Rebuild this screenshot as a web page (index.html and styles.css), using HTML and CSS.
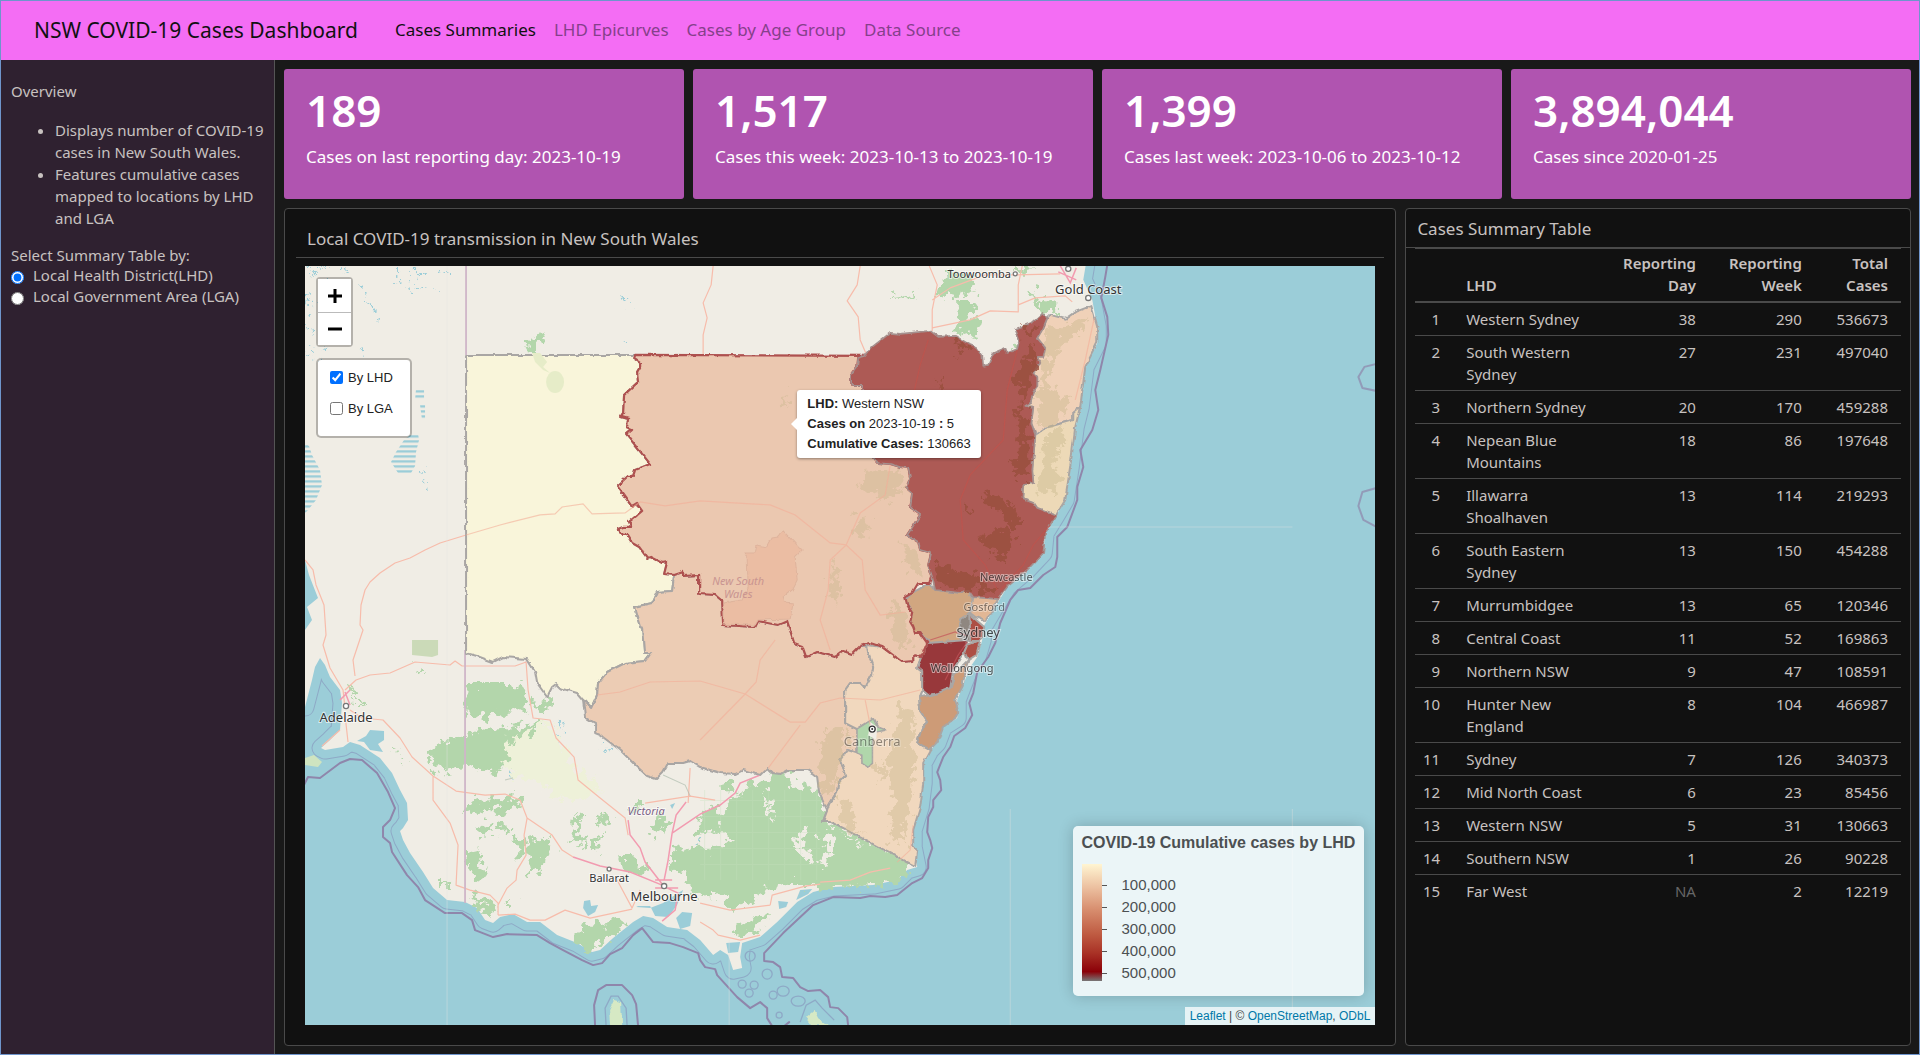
FILE: index.html
```html
<!DOCTYPE html>
<html lang="en">
<head>
<meta charset="utf-8">
<meta name="viewport" content="width=device-width, initial-scale=1">
<title>NSW COVID-19 Cases Dashboard</title>
<link rel="stylesheet" href="styles.css">
</head>
<body>
<header class="navbar">
  <h1 class="brand">NSW COVID-19 Cases Dashboard</h1>
  <nav class="nav">
    <a class="nav-link active" href="#summaries">Cases Summaries</a>
    <a class="nav-link" href="#epicurves">LHD Epicurves</a>
    <a class="nav-link" href="#age">Cases by Age Group</a>
    <a class="nav-link" href="#source">Data Source</a>
  </nav>
</header>
<div class="layout">
  <aside class="sidebar">
    <p class="overview">Overview</p>
    <ul class="notes">
      <li>Displays number of COVID-19 cases in New South Wales.</li>
      <li>Features cumulative cases mapped to locations by LHD and LGA</li>
    </ul>
    <fieldset class="selector">
      <legend>Select Summary Table by:</legend>
      <label><input type="radio" name="level" checked>Local Health District(LHD)</label>
      <label><input type="radio" name="level">Local Government Area (LGA)</label>
    </fieldset>
  </aside>
  <main class="content">
    <section class="values">
      <div class="value-box"><p class="value">189</p><p class="caption">Cases on last reporting day: 2023-10-19</p></div>
      <div class="value-box"><p class="value">1,517</p><p class="caption">Cases this week: 2023-10-13 to 2023-10-19</p></div>
      <div class="value-box"><p class="value">1,399</p><p class="caption">Cases last week: 2023-10-06 to 2023-10-12</p></div>
      <div class="value-box"><p class="value">3,894,044</p><p class="caption">Cases since 2020-01-25</p></div>
    </section>
    <section class="panels">
      <div class="card map-card">
        <h2 class="card-title map-title">Local COVID-19 transmission in New South Wales</h2>
        <div class="map">
          <svg class="map-canvas" viewBox="305 266 1070 759" preserveAspectRatio="xMidYMid slice" role="img" aria-label="Map of New South Wales health districts">
            <defs>
              <filter id="rough" x="-10%" y="-10%" width="120%" height="120%">
                <feTurbulence type="fractalNoise" baseFrequency="0.11" numOctaves="4" seed="4"/>
                <feDisplacementMap in="SourceGraphic" scale="24" xChannelSelector="R" yChannelSelector="G"/>
              </filter>
              <filter id="jag" x="-5%" y="-5%" width="110%" height="110%">
                <feTurbulence type="fractalNoise" baseFrequency="0.12" numOctaves="3" seed="9"/>
                <feDisplacementMap in="SourceGraphic" scale="4" xChannelSelector="R" yChannelSelector="G"/>
              </filter>
              <pattern id="lake" width="6" height="5" patternUnits="userSpaceOnUse"><path d="M0 1.5H6" stroke="#9bcdd8" stroke-width="2.4"/></pattern>
              <pattern id="grid" width="16" height="16" patternUnits="userSpaceOnUse"><path d="M0 .5H16M.5 0V16" stroke="#c5e0bd" stroke-width="1"/></pattern>
              <path id="land" d="M295 707L305 707 312 680 315 667 320 658 325 665 330 677 340 690 342 703 340 730 330 740 321 748 325 750 343 747 350 742 360 745 380 758 392 773 400 790 407 803 408 820 403 828 400 831 403 840 410 853 423 872 433 888 447 900 465 902 477 908 485 920 493 923 500 917 513 914 527 922 540 922 557 935 577 943 592 952 600 950 613 938 633 922 643 916 653 918 667 927 687 930 700 940 713 955 720 950 728 955 733 970 742 968 740 957 742 943 760 937 777 922 797 902 813 892 833 887 873 885 897 880 907 870 917 867 913 847 913 830 920 807 923 783 923 763 930 750 937 743 943 727 957 718 957 700 962 687 970 667 977 657 982 640 983 627 993 610 1007 587 1027 570 1043 553 1045 533 1056 515 1065 500 1070 467 1075 427 1080 407 1085 367 1097 343 1097 327 1092 300 1083 280 1087 256 295 256Z"/>
            </defs>
            <rect x="305" y="266" width="1070" height="759" fill="#9bcdd8"/>
            <g stroke-linejoin="round">
              <use href="#land" fill="none" stroke="#8ea9c6" stroke-width="19"/>
              <use href="#land" fill="none" stroke="#9bcdd8" stroke-width="17"/>
              <use href="#land" fill="#f0ede5"/>
            </g>
            <g fill="#9bcdd8">
              <path d="M295 555L305 560 309 575 318 598 307 607 312 620 305 630 295 630Z"/>
              <path d="M357 741L366 736 370 730 384 731 384 740 378 744 383 752 370 750 364 742Z"/>
              <path d="M636 907L650 908 663 903 675 895 683 890 677 905 668 917 655 916 650 906 638 906Z"/>
              <path d="M676 918L682 912 692 913 690 926 680 929Z"/>
              <path d="M584 901L590 900 591 906 598 905 595 912 588 916 583 908Z"/>
              <path d="M778 901L788 902 786 907 779 909Z"/>
              <path d="M800 890L812 889 808 894 796 900Z"/>
              <path d="M726 943L740 942 738 952 728 953Z"/>
              <path d="M509 770L514 778 513 780 509 776ZM565 785H568V791H563ZM670 805L675 803 672 809Z"/>
            </g>
            <path d="M305 443L309 446 312 455 320 470 322 485 316 500 308 510 305 513ZM410 435L418 434 419 440 416 452 415 466 411 473 398 473 391 462 396 452 404 440ZM416 389H424V400H415ZM420 405H425V420H422Z" fill="url(#lake)"/>
            <g fill="none" stroke="#9bcdd8" stroke-width="2" stroke-dasharray="4 6 2 8 5 3" filter="url(#rough)">
              <path d="M308 266L330 283M318 268L350 270M395 272L432 276M398 280L440 288M408 288L415 292M305 298L328 310M305 330L320 338M305 348L330 350M305 355L318 362M360 285L380 322M362 350L372 352M420 470L428 490M625 297L631 308M626 340L634 341M305 320L312 323M443 270L446 276"/>
              <path d="M555 724L570 730M555 735L562 738M603 740L608 752M698 840L712 850M806 806L812 812" stroke-width="3"/>
            </g>
            <g fill="#b3d6ab" filter="url(#rough)">
              <path d="M468 684H512L524 692 527 706 514 712 502 713 484 717 466 714Z"/>
              <path d="M530 703L548 699 554 702 545 711 534 708Z"/>
              <path d="M429 753L440 743 462 738 482 730 515 728 535 724 538 730 525 735 542 748 530 752 518 748 512 755 505 768 492 773 480 766 455 767 430 773Z"/>
              <path d="M466 806L480 800 520 798 524 804 510 812 488 810 467 815Z"/>
              <path d="M465 848L480 852 486 878 478 880 466 865Z"/>
              <path d="M517 840L524 835 526 852 516 855ZM530 840L545 838 552 855 540 865 532 875 528 855Z"/>
              <path d="M480 825L490 822 492 832 484 840ZM498 822L504 820 506 830 500 834ZM440 880H446V884H440ZM505 902L512 900 514 906 506 906ZM395 748L400 752 396 754ZM402 760L407 762 403 765ZM350 685L356 692 352 700ZM358 695L362 698 358 704ZM600 703L604 700 604 712ZM415 672L420 668 422 675Z"/>
              <path d="M467 894L490 898 497 912 490 918 478 905Z"/>
              <path d="M578 930L592 924 625 918 628 925 612 935 593 950 582 945 576 938Z"/>
              <path d="M575 812L582 815 580 835 585 848 572 840ZM595 818L608 812 612 822 600 826ZM650 830L662 812 668 820 658 835ZM620 855L632 855 645 868 640 878 622 870ZM592 840L602 835 600 852 592 850ZM633 802L640 802 638 812 630 810Z"/>
              <path d="M670 865L672 845 690 852 702 838 698 825 710 808 722 812 735 796 750 786 764 778 778 772 792 770 790 784 797 790 814 786 822 795 826 818 836 824 868 838 910 862 905 880 875 885 833 888 820 890 808 884 790 884 765 892 745 907 732 908 722 896 702 898 690 890 682 873Z"/>
              <path d="M728 930L745 922 755 915 765 912 766 922 750 932 735 935Z"/>
              <path d="M725 780L732 782 728 796 722 790ZM700 815L706 812 704 824 697 822Z"/>
              <path d="M525 345L532 338 544 335 540 342 535 347 543 358 530 355Z"/>
              <path d="M946 270L975 276 970 293 948 300 938 296ZM960 300L977 303 970 317 978 320 975 338 958 332ZM1018 266L1034 268 1030 272 1018 272ZM1028 290L1036 292 1040 302 1050 300 1060 311 1045 316 1040 314ZM890 296L916 293 915 297 890 298ZM1010 350L1018 344 1020 350 1012 354Z"/>
            </g>
            <path d="M412 640H438V655L432 657 412 655Z" fill="#cbdab8"/>
            <g fill="#eef1d9" filter="url(#rough)">
              <path d="M510 740L550 722 565 750 572 765 590 780 602 790 585 795 575 803 555 798 540 782 518 778 504 762Z"/>
            </g>
            <path d="M305 758L314 755 322 762 318 767 305 765Z" fill="#cfe4c0"/>
            <path d="M610 1025L609 1010 614 1000 621 1002 622 1025ZM806 1017L814 1010 818 1018 828 1025H812Z" fill="#d6e9c4" filter="url(#jag)"/>
            <path d="M815 838L830 832 835 838 828 858 825 870 818 864 828 846ZM795 836L806 828 802 843 812 858 808 862 796 850ZM700 835L720 828 730 838 715 850 700 848ZM764 790L772 798 770 808 776 817 768 815ZM793 775L812 775 815 785 800 787ZM838 832L850 838 865 845 848 840Z" fill="#f0ede5" filter="url(#rough)"/>
            <path d="M700 790H820V880H700Z" fill="url(#grid)" opacity=".35"/>
            <g fill="none" stroke="#f7bcab" stroke-width="1.2" stroke-linejoin="round">
              <path d="M305 560L313 570 316 585 324 605 326 635 323 645 330 668 343 690 345 708M345 690L356 680 370 675 390 673 415 662 450 665 455 661 462 666H515L526 662 528 690 533 718 550 720 556 738 574 757 578 780 600 798 625 818 628 835M466 535L440 543 425 550 410 558 395 563 380 573 370 582 365 590 361 605 360 625 363 630 357 648 353 660 355 676"/>
              <path d="M350 710L362 718 383 720 400 738 412 757 433 776 456 791 485 795 505 794 520 800 527 818 552 835 562 850 573 857M433 776V800L450 823 458 845 456 885 470 890 490 895 498 903V915M527 818L524 835 526 855 517 870 516 880 507 888 498 905M498 915L515 914 530 920 545 920 565 910 590 918 632 909M617 880L632 908 640 890M345 715L348 742M340 730L322 746"/>
              <path d="M713 266L711 285 703 303 707 318 703 335V354M860 266L857 285 847 301 858 317 860 340 866 354M929 266L937 285 932 310V331M932 300L950 288 985 275 1015 275 1060 274M932 328L970 320 990 311 1018 312 1018 285 1022 266M1018 305L1035 298 1065 296 1072 302M688 803L690 768M645 803L690 796 715 800M700 903L730 910 770 905M770 905L772 895 805 886 820 884M820 882L850 880 870 872 890 868M700 922L713 930 718 935 740 940 760 935"/>
            </g>
            <g fill="none" stroke="#f29bb0" stroke-width="1.5">
              <path d="M573 857L600 866 630 872 662 885M662 884L645 862 640 848 630 835 628 820M664 880L668 860 672 833 676 815 686 802M672 833L700 814 720 805 735 793 740 783 760 775M663 886L678 893 675 910 662 921M655 880H672M655 888H678M1060 266L1070 283 1076 268M1058 272L1076 280M340 700L350 690M345 692L350 705"/>
            </g>
            <g fill="none" stroke="#aebcae" stroke-width="1" opacity=".7"><path d="M663 775L685 785 690 796M505 780L513 778"/></g>
            <path d="M466 266V355M465 650V903" stroke="#cfb5c8" stroke-width="1.8"/>
            <g fill="none" stroke="#8f86ab" stroke-width="2" stroke-linejoin="round" stroke-linecap="round">
              <path d="M304 785L308 777 320 778 340 763 350 759 362 760 377 773 388 792 395 808 390 820 383 827 383 837 390 843 392 852 407 875 418 887 425 900 445 913 462 913 472 920 475 930 493 937 507 934 537 935 550 943 563 950 582 960 593 965 602 963 610 954 622 948 633 935 642 928 653 942 670 943 683 947 698 953 700 960 705 967 715 969 717 975 737 997 750 1008 760 1002 767 1008 767 1018 772 1026"/>
              <path d="M848 1026L847 1017 838 1008 830 1007 828 997 820 990 808 991 800 987 793 978 782 977 780 967 773 962 764 961V953L783 933 813 905 833 897 860 898 870 896 885 897 897 895 912 883 922 878 928 868V860L932 848 930 840 927 832 928 817 933 807V800L941 790 940 780 937 772 943 757 950 747 954 736 965 728 972 715 969 703 973 693 977 672 988 657 995 643 1000 623 1010 600 1018 590 1030 588 1043 575 1055 567 1057 557V537L1067 527 1077 500V487L1083 467 1080 450 1092 430 1098 410 1095 390 1100 370 1108 335 1107 317 1101 298 1105 277 1107 265"/>
              <path d="M595 1026L594 1005 598 990 606 985 622 985 632 995 636 1004 638 1026M784 1026L789 1022"/>
              <path d="M1376 364L1364 367 1358 377 1362 388 1376 391M1376 488L1362 492 1358 506 1363 520 1376 527" opacity=".7"/>
            </g>
            <g fill="none" stroke="#8ea9c6" stroke-width="1.3">
              <circle cx="767" cy="974" r="5"/><circle cx="750" cy="956" r="5"/><circle cx="742" cy="984" r="4"/><circle cx="773" cy="995" r="4"/><circle cx="754" cy="985" r="4"/><circle cx="749" cy="993" r="4"/><ellipse cx="783" cy="991" rx="6" ry="5"/><ellipse cx="798" cy="1001" rx="7" ry="5"/><circle cx="779" cy="1015" r="3"/><path d="M606 1026L605 1008 611 996 618 996 626 1008 627 1026M800 1022L806 1005 815 1000 822 1008 834 1020"/>
            </g>
            <path d="M447 266V1025M729 940V1025M1010 809V1025M1292 809V1025M1047 527H1292" stroke="#e3e2e0" opacity=".4"/>

            <g stroke="#a9a6a4" stroke-width="2" stroke-linejoin="round" filter="url(#jag)">
              <path fill="#f9f5da" d="M466 355H635L634 359 640 363 640 368 637 373 638 382 624 395 623 413 621 416 628 418 627 427 632 429 626 434 650 464 635 470 633 476 628 476 617 486 632 507 637 504 642 511 629 522 631 527 623 527 618 529 623 535 627 535 632 543 639 547 647 558 650 557 662 563 667 562 664 574 674 575 672 591 657 592 652 603 634 607 640 627 643 628 645 653 651 653 645 661 625 663 607 672 598 683 597 695 591 708 583 700 577 693 560 688 556 684 552 687 547 697 537 683 535 672 527 659 503 657 493 662 477 656 466 653Z"/>
              <path fill="#ecccb4" d="M583 700L591 708 597 695 598 683 607 672 625 663 645 661 651 653 645 653 643 628 640 627 634 607 652 603 657 592 672 591 674 575 683 572 683 576 699 575 699 594 715 595 721 600 722 625 755 627 758 621 778 625 787 621 794 643 802 646 806 657 817 652 835 657 843 651 852 654 860 646 867 646 868 653 873 667 872 675 865 688 860 683 850 683 845 690 845 723 857 729 857 753 847 750 840 760 846 775 838 783 837 792 829 805 829 817 823 821 827 810 819 793 817 777 812 773 807 770 787 770 780 774 772 773 767 768 760 775 743 770 735 774 720 773 700 767 690 761 683 763 668 763 663 772 656 779 647 776 633 763 620 750 600 735 595 733 595 723 585 717Z"/>
              <path fill="#f1d8be" d="M867 645L882 647 902 662 913 661 913 655 921 657 917 668 922 672 922 690 919 697 920 712 927 722 922 727 917 743 930 750 923 763 923 783 920 807 913 830 913 847 917 850 915 866 829 821 823 821 829 805 837 792 838 783 846 775 840 760 847 750 857 753 862 755 862 763 868 767 872 763 872 740 875 732 885 730 877 727 873 719 857 729 845 723 845 690 850 683 860 683 865 688 872 675 873 667 868 653Z"/>
              <path fill="#f0d1b8" d="M1047 318L1050 315 1065 319 1075 312 1091 306 1097 327 1097 343 1085 367 1080 407 1073 413V420L1055 425 1045 428 1036 437 1031 423 1033 407 1025 406 1030 403 1033 392 1037 387V377L1033 373 1039 363 1037 357 1045 348 1037 338 1043 328Z"/>
              <path fill="#edd9b7" d="M1080 407L1075 427 1070 467 1065 500 1056 515 1037 508 1033 502 1022 498 1023 485 1033 483 1032 470 1035 435 1045 428 1055 425 1073 420V413Z"/>
              <path fill="#cd9b77" d="M968 660L962 687 955 700 958 712 955 718 943 727 937 743 930 750 917 743 922 727 927 722 920 712 919 697 927 696 950 688 955 673Z"/>
              <path fill="#d1a680" d="M930 583L935 590 962 593 968 590 973 600 970 613 960 623 958 637 967 642 930 643 920 633 915 633 910 622 912 613 905 600 912 593Z"/>
              <path fill="#e2b795" d="M973 597L998 599 992 610 985 621 975 617 970 613Z"/>
              <path fill="#98393a" d="M927 643L967 640 968 646 958 663 953 670 950 688 938 693 928 695 922 690V672L917 668 921 657Z"/>
              <path fill="#ad4f44" d="M967 645L980 640 976 655 968 660 964 652ZM969 614L984 627 982 637 978 641 970 641Z"/>
              <path fill="#8f8780" d="M961 619L969 614 970 641 958 635Z"/>
            </g>
            <g fill="#c9b88d" opacity=".42" filter="url(#rough)">
              <path d="M1045 330L1062 328 1085 320 1080 335 1065 338 1055 360 1045 385 1070 402 1060 420 1042 430 1038 415 1040 385 1044 360ZM1044 438L1066 428 1062 450 1050 460 1062 478 1056 496 1036 490 1042 470Z"/>
              <path d="M900 700L915 720 910 745 916 760 912 800 903 825 908 848 890 840 895 800 885 760 895 730ZM838 795L850 805 858 830 868 836 842 824ZM847 728L854 734 850 748 846 738ZM822 730L843 728 840 755 835 785 828 798 820 780 822 750ZM873 760L885 770 880 782Z"/>
            </g>
            <path d="M857 729L873 719 877 727 885 730 875 732 872 740 872 763 868 767 862 763 862 755 857 753Z" fill="#b0d6ab" stroke="#a9a6a4"/>
            <path d="M870 722L877 727 876 740 868 735Z" fill="#f0ede5"/>
            <path filter="url(#jag)" fill="#ebc8b0" stroke="#ae5150" stroke-width="2.2" stroke-linejoin="round" d="M635 355L634 359 640 363 640 368 637 373 638 382 624 395 623 413 621 416 628 418 627 427 632 429 626 434 650 464 635 470 633 476 628 476 617 486 632 507 637 504 642 511 629 522 631 527 623 527 618 529 623 535 627 535 632 543 639 547 647 558 650 557 662 563 667 562 664 574 674 575 683 572 683 576 699 575 699 594 715 595 721 600 722 625 755 627 758 621 778 625 787 621 794 643 802 646 806 657 817 652 835 657 843 651 852 654 860 646 870 643 882 647 902 662 913 661 913 655 921 657 927 643 920 633 915 633 913 627 910 622 912 613 907 605 905 597 912 593 918 583 930 583 932 577 928 565 931 553 920 550 918 542 907 535 920 515 910 508 912 493 906 488 910 478 908 468 900 467 890 464 877 463 873 458 862 430 862 385 851 385 851 375 857 367 858 358 865 356Z"/>
            <path filter="url(#jag)" fill="#ebbda3" stroke="#dfb49d" d="M783 530L795 543 802 550 795 557 797 580 792 590 783 597 785 602 793 603 790 619 758 620 755 625 723 624 723 603 742 600 748 587 747 557 744 553 755 553 757 545 767 547 772 538 778 537Z"/>
            <g fill="#c9b88d" opacity=".38" filter="url(#rough)">
              <path d="M880 467L903 474 904 487 885 500 862 490 865 475ZM858 515L870 520 866 538 855 535ZM903 542L915 552 924 565 922 578 908 572ZM833 565L840 570 836 605 830 600ZM890 600L904 610 908 650 900 650 892 625ZM783 397L788 395 785 405 781 403Z"/>
            </g>
            <g stroke-linejoin="round" filter="url(#jag)">
              <path fill="#ad5a54" stroke="#a5908e" stroke-width="1.6" d="M865 356L872 347 890 333 900 334 930 331 938 337 955 336 970 345 977 348 982 355 983 366 988 365 993 353 1005 348 1007 353 1017 349 1019 340 1015 329 1033 322 1042 314 1047 318 1043 328 1037 338 1045 348 1043 357 1037 357 1039 363 1033 373 1037 377V387L1033 392 1030 403 1025 406 1033 407 1031 423 1035 435 1033 460 1032 470 1033 483 1023 485 1022 498 1033 502 1037 508 1056 515 1045 533 1043 553 1027 570 1007 587 998 599 987 598 973 597 968 590 962 593 935 590 932 577 928 565 931 553 920 550 918 542 907 535 920 515 910 508 912 493 906 488 910 478 908 468 900 467 890 464 877 463 873 458 862 430 862 385 851 385 851 375 857 367 858 358Z"/>
            </g>
            <g fill="#994f3c" opacity=".8" filter="url(#rough)">
              <path d="M1034 345L1037 355 1030 390 1022 400 1028 440 1028 480 1018 480 1010 462 1022 450 1018 420 1020 395 1014 372 1025 360ZM980 495L1000 492 1015 510 1022 525 1010 525 995 510ZM980 535L1010 528 1018 540 1002 560 985 550ZM937 562L955 570 975 575 995 588 990 594 965 588 942 586 935 575ZM955 340L968 345 966 352 956 350ZM1022 330L1038 322 1034 330 1030 336ZM935 380L940 378 938 386ZM963 505L972 508 966 514Z"/>
            </g>
            <g fill="none" stroke="#c2524c" stroke-width="1.2" opacity=".7">
              <path d="M928 340L920 365 912 400 900 440M1017 350L1007 390 1003 440 970 475 960 500 963 540 985 565 997 590M1050 525L1033 545 1023 565 1000 590"/>
              <path d="M945 680L958 655 967 642M930 640L955 632 968 636" stroke="#c4545a"/>
            </g>
            <g fill="none" stroke="#f4ae98" stroke-width="1.2" opacity=".6">
              <path d="M466 535L500 525 540 515 555 514 562 507 583 504 592 514 625 513 640 502 665 506 700 501 770 505 795 515 830 543 846 545 860 513 885 495 890 465M846 545L862 560 865 590 880 615 905 612M846 545L830 560 828 590 820 620 830 650M597 695L620 692 650 682 700 681 745 694 790 722 805 722 820 703 840 698 880 700 920 690M700 740L745 694 756 682 760 660 775 640M768 768L800 725M865 700L870 725M1094 318L1085 360 1075 400M913 825L910 850 897 862"/>
            </g>
            <g fill="#e6ecc8"><path d="M532 353L540 353 547 362 543 367 550 373 543 370 535 362Z"/><ellipse cx="555" cy="382" rx="9" ry="11"/></g>

            <g class="places">
              <g class="town" text-anchor="middle">
                <text x="979" y="278">Toowoomba</text>
                <text x="1006" y="581" opacity=".75">Newcastle</text>
                <text x="984" y="611" opacity=".6">Gosford</text>
                <text x="962" y="672" opacity=".85">Wollongong</text>
                <text x="609" y="882">Ballarat</text>
              </g>
              <g class="city" text-anchor="middle">
                <text x="1088" y="294">Gold Coast</text>
                <text x="978" y="637" opacity=".85">Sydney</text>
                <text x="872" y="746" opacity=".5">Canberra</text>
                <text x="346" y="722">Adelaide</text>
                <text x="664" y="901">Melbourne</text>
              </g>
              <g class="region" text-anchor="middle">
                <text x="646" y="815">Victoria</text>
                <text x="738" y="585" class="faint">New South</text>
                <text x="738" y="598" class="faint">Wales</text>
              </g>
            </g>
            <g fill="#fff" stroke="#777" stroke-width="1.3">
              <circle cx="346" cy="706" r="2.6"/><circle cx="664" cy="886" r="2.6"/><circle cx="609" cy="869" r="2"/><circle cx="1015" cy="274" r="2"/><circle cx="1068" cy="269" r="2.6"/><circle cx="1088" cy="298" r="2.6"/><circle cx="872" cy="729" r="3" stroke="#333"/>
            </g>
            <circle cx="872" cy="729" r="1" fill="#333"/>
          </svg>

          <div class="zoom">
            <button type="button" aria-label="Zoom in"><svg viewBox="0 0 14 14"><path d="M7 0V14M0 7H14"/></svg></button>
            <button type="button" aria-label="Zoom out"><svg viewBox="0 0 14 14"><path d="M0 7H14"/></svg></button>
          </div>
          <div class="layers">
            <label><input type="checkbox" checked>By LHD</label>
            <label><input type="checkbox">By LGA</label>
          </div>
          <div class="tooltip">
            <b>LHD:</b> Western NSW<br>
            <b>Cases on</b> 2023-10-19 <b>:</b> 5<br>
            <b>Cumulative Cases:</b> 130663
          </div>
          <div class="legend">
            <p class="legend-title">COVID-19 Cumulative cases by LHD</p>
            <div class="scale">
              <span class="ramp"></span>
              <ul class="ticks"><li>100,000</li><li>200,000</li><li>300,000</li><li>400,000</li><li>500,000</li></ul>
            </div>
          </div>
          <div class="attribution"><a href="#leaflet">Leaflet</a> | © <a href="#osm">OpenStreetMap</a>, <a href="#odbl">ODbL</a></div>
        </div>
      </div>
      <div class="card table-card">
        <h2 class="card-title">Cases Summary Table</h2>
        <table class="cases">
          <colgroup><col class="c-rank"><col class="c-name"><col class="c-day"><col class="c-week"><col class="c-total"></colgroup>
          <thead><tr><th></th><th>LHD</th><th>Reporting Day</th><th>Reporting Week</th><th>Total Cases</th></tr></thead>
          <tbody>
            <tr><td>1</td><td>Western Sydney</td><td>38</td><td>290</td><td>536673</td></tr>
            <tr><td>2</td><td>South Western Sydney</td><td>27</td><td>231</td><td>497040</td></tr>
            <tr><td>3</td><td>Northern Sydney</td><td>20</td><td>170</td><td>459288</td></tr>
            <tr><td>4</td><td>Nepean Blue Mountains</td><td>18</td><td>86</td><td>197648</td></tr>
            <tr><td>5</td><td>Illawarra Shoalhaven</td><td>13</td><td>114</td><td>219293</td></tr>
            <tr><td>6</td><td>South Eastern Sydney</td><td>13</td><td>150</td><td>454288</td></tr>
            <tr><td>7</td><td>Murrumbidgee</td><td>13</td><td>65</td><td>120346</td></tr>
            <tr><td>8</td><td>Central Coast</td><td>11</td><td>52</td><td>169863</td></tr>
            <tr><td>9</td><td>Northern NSW</td><td>9</td><td>47</td><td>108591</td></tr>
            <tr><td>10</td><td>Hunter New England</td><td>8</td><td>104</td><td>466987</td></tr>
            <tr><td>11</td><td>Sydney</td><td>7</td><td>126</td><td>340373</td></tr>
            <tr><td>12</td><td>Mid North Coast</td><td>6</td><td>23</td><td>85456</td></tr>
            <tr><td>13</td><td>Western NSW</td><td>5</td><td>31</td><td>130663</td></tr>
            <tr><td>14</td><td>Southern NSW</td><td>1</td><td>26</td><td>90228</td></tr>
            <tr><td>15</td><td>Far West</td><td class="missing">NA</td><td>2</td><td>12219</td></tr>
          </tbody>
        </table>
      </div>
    </section>
  </main>
</div>
</body>
</html>
```
FILE: styles.css
```css
* { box-sizing: border-box; }

body {
  margin: 0;
  min-height: 100vh;
  display: flex;
  flex-direction: column;
  border: 1px solid #6f95cc;
  background: #191919;
  color: #c8c2c0;
  font: 15px/22px "Noto Sans", "Open Sans", sans-serif;
}

h1, h2, p, ul { margin: 0; font-weight: 400; }

.navbar {
  display: flex;
  align-items: center;
  gap: 37px;
  height: 59px;
  padding: 0 33px 2px;
  background: #f46df4;
}
.brand { font-size: 21px; line-height: 30px; color: #111; }
.nav { display: flex; gap: 18px; }
.nav-link { font-size: 17px; color: #85408a; text-decoration: none; }
.nav-link.active { color: #111; }

.layout { flex: 1; display: flex; }

.sidebar {
  flex: 0 0 274px;
  padding: 20px 6px 20px 10px;
  background: #2f2130;
  border-right: 1px solid #555;
}
.notes { margin: 17px 0 16px; padding-left: 44px; }
.selector { margin: 0; padding: 0; border: 0; }
.selector legend { padding: 0; line-height: 20px; }
.selector label { display: flex; align-items: center; gap: 9px; height: 21px; line-height: 21px; }
.selector input { width: 13px; height: 13px; margin: 3px 0 0; accent-color: #0070ff; }

.content {
  flex: 1;
  min-width: 0;
  display: flex;
  flex-direction: column;
  gap: 9px;
  padding: 9px 8px 8px 9px;
}

.values { display: grid; grid-template-columns: repeat(4, 1fr); gap: 9px; }
.value-box {
  height: 130px;
  padding: 16px 22px;
  border-radius: 3px;
  background: #b054b0;
  color: #fff;
}
.value { font-size: 44px; line-height: 50px; font-weight: 600; }
.caption { margin-top: 10px; font-size: 17px; line-height: 24px; white-space: nowrap; }

.panels { flex: 1; display: grid; grid-template-columns: 11fr 5fr; gap: 9px; }
.card {
  display: flex;
  flex-direction: column;
  min-width: 0;
  border: 1px solid #4a4a4a;
  border-radius: 4px;
  background: #111;
}
.card-title { padding: 9px 11px 7px; font-size: 17px; line-height: 22px; border-bottom: 1px solid #4a4a4a; }

.map-card { padding: 10px 11px 20px; }
.map { position: relative; flex: 1; min-height: 600px; margin: 8px 9px 0; overflow: hidden; font-family: "Liberation Sans", Arial, sans-serif; color: #222; }
.map-canvas { position: absolute; inset: 0; width: 100%; height: 100%; display: block; }

.places { font-family: "Noto Sans", sans-serif; fill: #333; paint-order: stroke; stroke: rgba(255, 255, 255, .6); stroke-width: 2px; }
.town { font-size: 11px; }
.city { font-size: 13px; }
.region { font-size: 11px; font-style: italic; fill: #7c5f85; }
.faint { fill: #c99490; stroke: none; }

.zoom {
  position: absolute;
  left: 11px;
  top: 11px;
  display: grid;
  border: 2px solid rgba(0, 0, 0, .25);
  border-radius: 4px;
  background-clip: padding-box;
}
.zoom button { display: grid; place-items: center; width: 33px; height: 33px; padding: 0; border: 0; background: #fff; }
.zoom button + button { border-top: 1px solid #bbb; }
.zoom svg { width: 14px; height: 14px; stroke: #000; stroke-width: 3; }

.layers {
  position: absolute;
  left: 11px;
  top: 92px;
  width: 96px;
  height: 80px;
  padding: 8px 12px;
  border: 2px solid rgba(0, 0, 0, .25);
  border-radius: 5px;
  background: #fff;
  background-clip: padding-box;
}
.layers label { display: flex; align-items: center; gap: 5px; margin-bottom: 11px; font-size: 13px; line-height: 20px; }
.layers input { width: 13px; height: 13px; margin: 0 0 2px; accent-color: #0070ff; }

.tooltip {
  position: absolute;
  left: 46%;
  top: 124px;
  padding: 4px 10px;
  border-radius: 3px;
  background: #fff;
  box-shadow: 0 1px 3px rgba(0, 0, 0, .4);
  font-size: 13px;
  line-height: 20px;
  white-space: nowrap;
}
.tooltip::before { content: ""; position: absolute; left: -12px; top: 28px; border: 6px solid transparent; border-right-color: #fff; }

.legend {
  position: absolute;
  right: 11px;
  bottom: 29px;
  height: 170px;
  padding: 7px 9px;
  border-radius: 5px;
  background: rgba(255, 255, 255, .8);
  box-shadow: 0 0 15px rgba(0, 0, 0, .2);
  font-size: 15px;
  color: #4c5052;
}
.legend-title { font-size: 16px; line-height: 20px; font-weight: 700; }
.scale { display: flex; margin-top: 11px; }
.ramp { width: 20px; height: 117px; background: linear-gradient(#fff5d2, #ecc0a0 20%, #d68b6c 40%, #bf5b42 60%, #a93226 76%, #8b0008 92%, #777); }
.ticks { padding: 10px 0 0; list-style: none; }
.ticks li { display: flex; align-items: center; gap: 15px; line-height: 22px; }
.ticks li::before { content: ""; width: 5px; height: 1px; background: #555; }

.attribution { position: absolute; right: 0; bottom: 0; padding: 0 5px; background: rgba(255, 255, 255, .75); font-size: 12px; line-height: 18px; color: #444; }
.attribution a { color: #0078a8; text-decoration: none; }

.cases { margin: 0 9px; border-collapse: collapse; table-layout: fixed; border-top: 1px solid #4a4a4a; }
.c-rank { width: 8%; }
.c-name { width: 33%; }
.c-day { width: 19%; }
.c-week { width: 22%; }
.c-total { width: 18%; }
.cases th { padding: 3px 13px 5px; vertical-align: bottom; font-weight: 600; text-align: right; }
.cases td { padding: 5px 13px; vertical-align: top; text-align: right; border-top: 1px solid #4a4a4a; }
.cases th:nth-child(2), .cases td:nth-child(2) { text-align: left; }
.cases td:first-child { padding: 5px 13px 5px 0; }
.cases thead { border-bottom: 2px solid #4a4a4a; }
.cases .missing { color: #666; }
```
